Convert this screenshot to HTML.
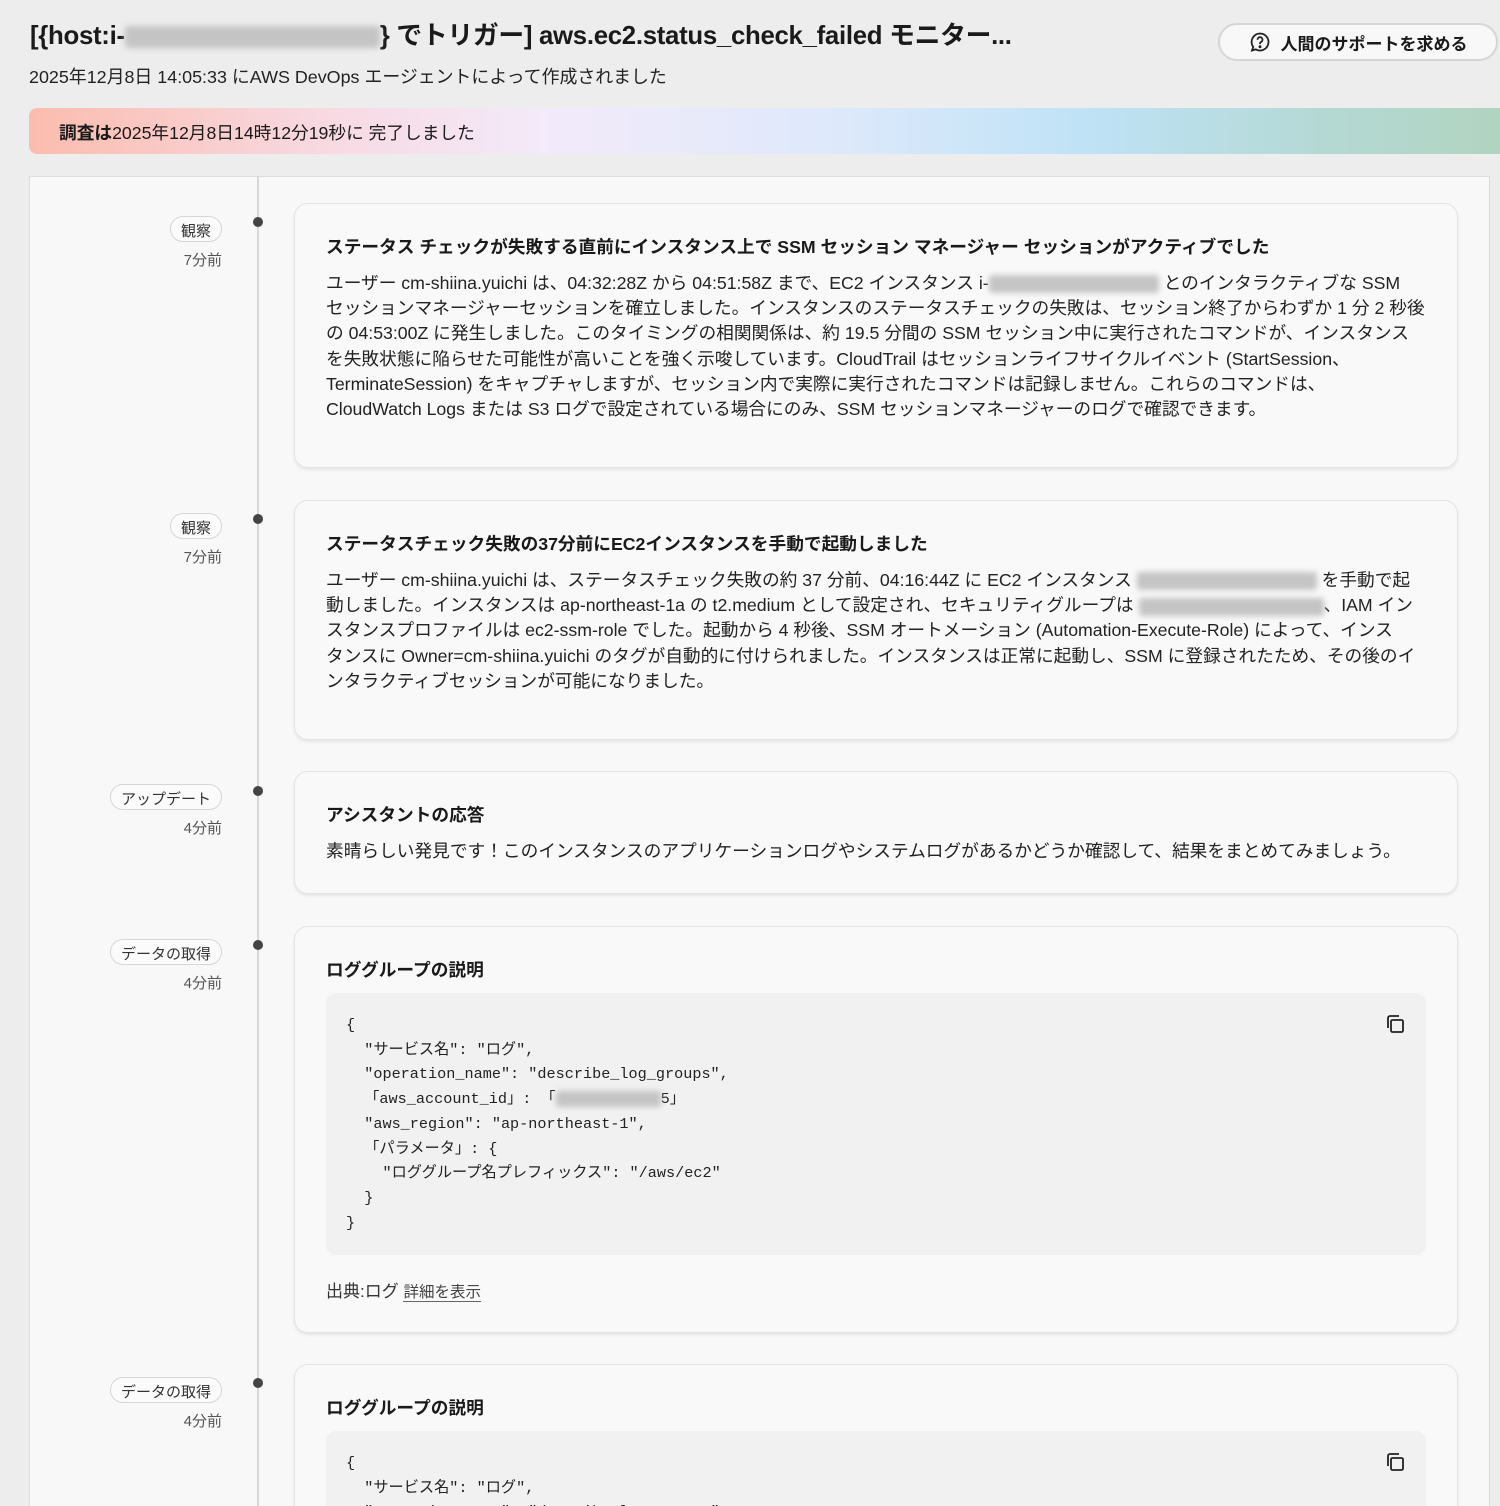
<!DOCTYPE html>
<html><head><meta charset="utf-8"><style>
*{margin:0;padding:0;box-sizing:border-box}
html{width:1500px;height:1506px;overflow:hidden}
body{width:1500px;height:1506px;overflow:hidden;background:#ededed;font-family:"Liberation Sans","Noto Sans CJK JP",sans-serif;color:#1a1a1a;position:relative}
.abs{position:absolute}
h1{position:absolute;left:30px;top:15px;font-size:25.8px;font-weight:bold;white-space:nowrap;letter-spacing:-0.3px}
.blur{display:inline-block;background:#c4c4c4;filter:blur(3px);vertical-align:middle;border-radius:3px}
.sub{left:29px;top:63px;font-size:17.9px;color:#222;white-space:nowrap}
.btn{left:1218px;top:23px;width:280px;height:38px;border:2px solid #d6d6d6;border-radius:20px;background:#f8f8f8;font-size:17px;font-weight:bold;display:flex;align-items:center;justify-content:center;gap:10px}
.banner{left:29px;top:108px;width:1471px;height:46px;border-radius:8px 0 0 8px;background:linear-gradient(90deg,#fbbcae 0%,#f8d9e2 20%,#f3eafa 35%,#dde9fb 55%,#bfe2f6 72%,#b4d9d4 88%,#b1d4c0 100%);font-size:17.7px;padding:11px 0 0 30px;white-space:nowrap}
.panel{left:29px;top:176px;width:1461px;height:1330px;background:#f8f8f8;border:1px solid #dcdcdc;border-bottom:none}
.line{left:257px;top:176px;width:2px;height:1330px;background:#d8d8d8}
.dot{width:10px;height:10px;border-radius:50%;background:#444;left:253px}
.pill{right:1278px;height:26px;border:1.5px solid #d6d6d6;border-radius:14px;background:#fbfbfb;font-size:15px;color:#333;padding:3px 10px;white-space:nowrap}
.ago{right:1278px;font-size:15px;color:#555;white-space:nowrap}
.card{left:294px;width:1164px;background:#f9f9f9;border:1.5px solid #e4e4e4;border-radius:14px;box-shadow:0 2px 3px rgba(0,0,0,.08);padding:32px 30px 0 31px;overflow:hidden}
.card h3{font-size:17.7px;font-weight:bold;margin-top:0;line-height:22px;white-space:nowrap}
.card p{font-size:17.7px;line-height:25.2px;margin-top:13px;white-space:nowrap;color:#222}
.code{background:#f1f1f1;border-radius:10px;margin-top:12px;width:1100px;padding:20px 20px 0 20px;font-family:"Liberation Mono","Noto Sans CJK JP",monospace;font-size:15.2px;line-height:24.7px;white-space:pre;position:relative;color:#222;height:262px}
.copy{position:absolute;right:20px;top:20px}
.src{font-size:17px;margin-top:22px;color:#333}
.src u{font-size:15.5px;color:#444;text-decoration:none;border-bottom:1px solid #666}
</style></head><body>
<h1>[{host:i-<span class="blur" style="width:255px;height:22px"></span>} でトリガー] aws.ec2.status_check_failed モニター...</h1>
<div class="abs sub">2025年12月8日 14:05:33 にAWS DevOps エージェントによって作成されました</div>
<div class="abs btn"><svg width="22" height="22" viewBox="0 0 22 22" fill="none" stroke="#222" stroke-width="1.8"><path d="M11 2.5a8.5 8.5 0 1 1-4.2 15.9L3 19.5l1.2-3.6A8.5 8.5 0 0 1 11 2.5z"/><path d="M8.5 8.7a2.5 2.5 0 1 1 3.4 2.3c-.6.3-.9.8-.9 1.5v.6"/><circle cx="11" cy="15.8" r=".6" fill="#222"/></svg><span>人間のサポートを求める</span></div>
<div class="abs banner"><b>調査は</b>2025年12月8日14時12分19秒に 完了しました</div>
<div class="abs panel"></div>
<div class="abs line"></div>

<div class="abs dot" style="top:217px"></div>
<div class="abs pill" style="top:216px">観察</div>
<div class="abs ago" style="top:249px">7分前</div>
<div class="abs card" style="top:203px;height:265px">
<h3>ステータス チェックが失敗する直前にインスタンス上で SSM セッション マネージャー セッションがアクティブでした</h3>
<p>ユーザー cm-shiina.yuichi は、04:32:28Z から 04:51:58Z まで、EC2 インスタンス i-<span class="blur" style="width:170px;height:18px"></span> とのインタラクティブな SSM<br>セッションマネージャーセッションを確立しました。インスタンスのステータスチェックの失敗は、セッション終了からわずか 1 分 2 秒後<br>の 04:53:00Z に発生しました。このタイミングの相関関係は、約 19.5 分間の SSM セッション中に実行されたコマンドが、インスタンス<br>を失敗状態に陥らせた可能性が高いことを強く示唆しています。CloudTrail はセッションライフサイクルイベント (StartSession、<br>TerminateSession) をキャプチャしますが、セッション内で実際に実行されたコマンドは記録しません。これらのコマンドは、<br>CloudWatch Logs または S3 ログで設定されている場合にのみ、SSM セッションマネージャーのログで確認できます。</p>
</div>

<div class="abs dot" style="top:514px"></div>
<div class="abs pill" style="top:513px">観察</div>
<div class="abs ago" style="top:546px">7分前</div>
<div class="abs card" style="top:500px;height:240px">
<h3>ステータスチェック失敗の37分前にEC2インスタンスを手動で起動しました</h3>
<p>ユーザー cm-shiina.yuichi は、ステータスチェック失敗の約 37 分前、04:16:44Z に EC2 インスタンス <span class="blur" style="width:180px;height:18px"></span> を手動で起<br>動しました。インスタンスは ap-northeast-1a の t2.medium として設定され、セキュリティグループは <span class="blur" style="width:185px;height:18px"></span>、IAM イン<br>スタンスプロファイルは ec2-ssm-role でした。起動から 4 秒後、SSM オートメーション (Automation-Execute-Role) によって、インス<br>タンスに Owner=cm-shiina.yuichi のタグが自動的に付けられました。インスタンスは正常に起動し、SSM に登録されたため、その後のイ<br>ンタラクティブセッションが可能になりました。</p>
</div>

<div class="abs dot" style="top:786px"></div>
<div class="abs pill" style="top:784px">アップデート</div>
<div class="abs ago" style="top:817px">4分前</div>
<div class="abs card" style="top:771px;height:123px">
<h3>アシスタントの応答</h3>
<p>素晴らしい発見です！このインスタンスのアプリケーションログやシステムログがあるかどうか確認して、結果をまとめてみましょう。</p>
</div>

<div class="abs dot" style="top:940px"></div>
<div class="abs pill" style="top:939px">データの取得</div>
<div class="abs ago" style="top:972px">4分前</div>
<div class="abs card" style="top:926px;height:407px">
<h3>ロググループの説明</h3>
<div class="code">{
  "サービス名": "ログ",
  "operation_name": "describe_log_groups",
  「aws_account_id」: 「<span class="blur" style="width:105px;height:16px"></span>5」
  "aws_region": "ap-northeast-1",
  「パラメータ」: {
    "ロググループ名プレフィックス": "/aws/ec2"
  }
}
<svg class="copy" width="22" height="22" viewBox="0 0 22 22" fill="none" stroke="#222" stroke-width="1.8"><rect x="7" y="7" width="12" height="12" rx="1.5"/><path d="M4 15V5a2 2 0 0 1 2-2h9"/></svg></div>
<div class="src">出典:ログ <u>詳細を表示</u></div>
</div>

<div class="abs dot" style="top:1378px"></div>
<div class="abs pill" style="top:1377px">データの取得</div>
<div class="abs ago" style="top:1410px">4分前</div>
<div class="abs card" style="top:1364px;height:142px;border-bottom:none;border-radius:14px 14px 0 0">
<h3>ロググループの説明</h3>
<div class="code" style="height:200px">{
  "サービス名": "ログ",
  "operation_name": "describe_log_groups",
<svg class="copy" width="22" height="22" viewBox="0 0 22 22" fill="none" stroke="#222" stroke-width="1.8"><rect x="7" y="7" width="12" height="12" rx="1.5"/><path d="M4 15V5a2 2 0 0 1 2-2h9"/></svg></div>
</div>
</body></html>
